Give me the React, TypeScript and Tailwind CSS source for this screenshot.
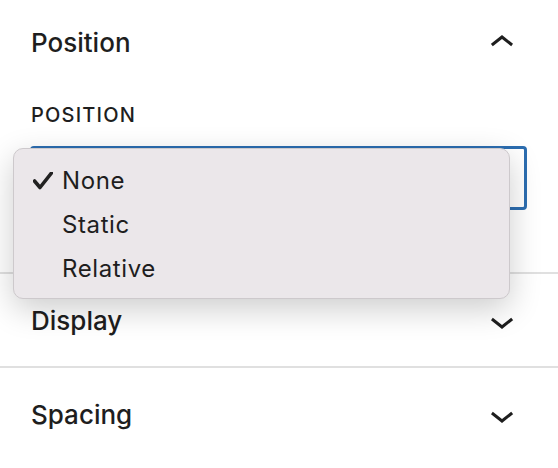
import React from "react"

function ChevronUp() {
  return (
    <svg width="48" height="48" viewBox="0 0 24 24" className="shrink-0">
      <path d="M6.5 12.4L12 8l5.5 4.4-.9 1.2L12 10l-4.6 3.6-1-1.2z" fill="#1e1e1e" />
    </svg>
  )
}

function ChevronDown() {
  return (
    <svg width="48" height="48" viewBox="0 0 24 24" className="shrink-0">
      <path d="M17.5 11.6L12 16l-5.5-4.4.9-1.2L12 14l4.6-3.6 1 1.2z" fill="#1e1e1e" />
    </svg>
  )
}

function PanelHeader({ title, open }: { title: string; open?: boolean }) {
  return (
    <div className="flex h-[48px] items-center justify-between">
      <span className="text-[26px] font-medium leading-[48px] text-[#1e1e1e]">{title}</span>
      {open ? <ChevronUp /> : <ChevronDown />}
    </div>
  )
}

const options = ["None", "Static", "Relative"]

export default function App() {
  const selected = "None"
  return (
    <div className="relative h-[468px] w-[558px] overflow-hidden bg-white font-['Inter',sans-serif] text-[#1e1e1e]">
      {/* Position panel */}
      <section className="pb-[62px] pl-[31px] pr-[32px] pt-[19px]">
        <PanelHeader title="Position" open />
        <div className="mt-[34px] text-[20px] font-medium uppercase leading-[28px] tracking-[1.2px]">
          Position
        </div>
        <div className="ml-[-1px] mr-[-1px] mt-[17px] h-[64px] rounded-[4px] border-[3px] border-[#2c6db0]" />
      </section>

      {/* Display panel */}
      <section className="border-t-2 border-[#e0e0e0] pb-[21px] pl-[31px] pr-[32px] pt-[23px]">
        <PanelHeader title="Display" />
      </section>

      {/* Spacing panel */}
      <section className="border-t-2 border-[#e0e0e0] pl-[31px] pr-[32px] pt-[23px]">
        <PanelHeader title="Spacing" />
      </section>

      {/* Open select menu */}
      <div className="absolute left-[13px] top-[148px] w-[497px] rounded-[10px] border border-[#cdc9cc] bg-[#ebe7ea] pb-[7px] pt-[10px] shadow-[0_10px_32px_rgba(0,0,0,0.2)]">
        {options.map((opt) => (
          <div key={opt} className="flex h-[44px] items-center">
            <div className="flex w-[48px] shrink-0 items-center">
              {opt === selected && (
                <svg width="20" height="18" viewBox="0 0 20 18" className="ml-[19px]">
                  <path
                    d="M1.5 9 L7 15.5 L18.5 1"
                    fill="none"
                    stroke="#222"
                    strokeWidth="3.6"
                    strokeLinecap="round"
                    strokeLinejoin="round"
                  />
                </svg>
              )}
            </div>
            <span className="text-[24px] leading-[44px] tracking-[0.6px] text-[#1e1e1e]">{opt}</span>
          </div>
        ))}
      </div>
    </div>
  )
}
